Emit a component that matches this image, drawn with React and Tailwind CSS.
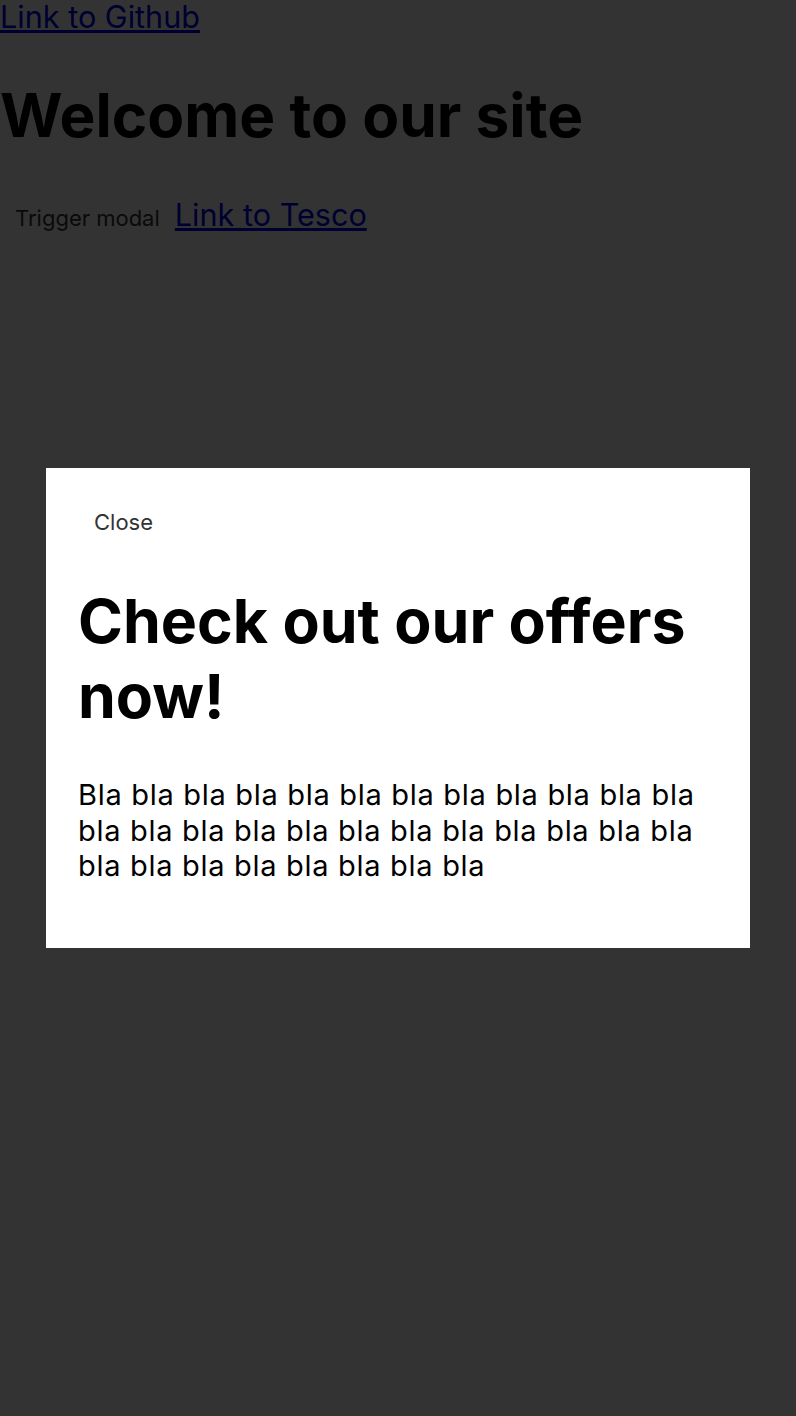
export default function App() {
  const font = { fontFamily: "Inter, 'Noto Sans', sans-serif" };
  return (
    <div className="relative min-h-[1416px] bg-white text-black" style={font}>
      <a href="#" className="block w-fit text-[30.6px] leading-[33px] text-[#0000ee] underline">
        Link to Github
      </a>
      <h1 className="mt-[46px] mb-[44px] text-[60.3px] leading-[73px] font-bold">Welcome to our site</h1>
      <div className="flex items-baseline">
        <button className="px-[15px] py-[9px] text-[22px] leading-[26px] text-[#333]">
          Trigger modal
        </button>
        <a href="#" className="text-[30.6px] leading-[32px] text-[#0000ee] underline">
          Link to Tesco
        </a>
      </div>

      <div className="fixed inset-0 flex items-center justify-center bg-black/80">
        <div className="w-[704px] bg-white p-8">
          <button className="px-[16px] py-[9px] text-[22px] leading-[26px] text-[#333]">
            Close
          </button>
          <h2 className="mt-[40px] text-[60.8px] leading-[75px] font-bold text-black">
            Check out our offers now!
          </h2>
          <p className="mt-[43px] mb-[32px] text-[29px] leading-[35.5px] tracking-[0.7px] text-black">
            Bla bla bla bla bla bla bla bla bla bla bla bla bla bla bla bla bla bla bla bla bla bla bla bla bla bla bla bla bla bla bla bla
          </p>
        </div>
      </div>
    </div>
  );
}
